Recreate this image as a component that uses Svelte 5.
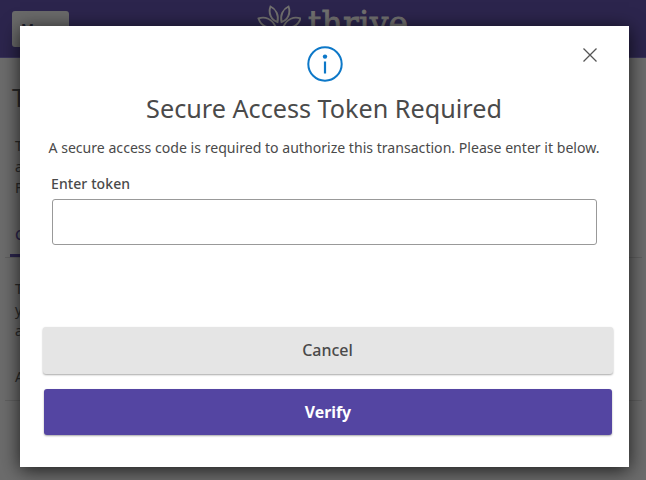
<script lang="ts">
  let open = $state(true);
  let token = $state('');

  function close() {
    open = false;
  }

  function verify(event: SubmitEvent) {
    event.preventDefault();
    if (token) close();
  }
</script>

<div class="page">
  <header class="topbar">
    <button class="menu" type="button">Menu</button>
    <div class="brand">
      <svg width="44" height="30" viewBox="0 0 44 30" fill="none" stroke="currentColor" stroke-width="1.9">
        <path d="M13.500 1.500C19 4 22 10 20.500 17C14 15 11 8 13.500 1.500Z" />
        <path d="M31.500 1.500C26 4 23 10 24.500 17C31 15 34 8 31.500 1.500Z" />
        <path d="M1.500 13.500C8 11 15 14 18.500 21.500C11 24 4 21 1.500 13.500Z" />
        <path d="M43.500 13.500C37 11 30 14 26.500 21.500C34 24 41 21 43.500 13.500Z" />
      </svg>
      <span>thrive</span>
    </div>
  </header>

  <main>
    <h1>T</h1>
    <p class="intro">T<br />a<br />F</p>
    <div class="tabs"><span class="tab">C</span></div>
    <p class="details">T<br />y<br />a</p>
    <p class="account">A</p>
  </main>
</div>

{#if open}
  <div class="backdrop">
    <form class="modal" onsubmit={verify}>
      <button class="close" type="button" aria-label="Close" onclick={close}>
        <svg width="14" height="14" viewBox="0 0 14 14" stroke="currentColor" stroke-width="1.3">
          <path d="M0.5 0.5L13.500 13.500M13.500 0.500L0.500 13.500" />
        </svg>
      </button>

      <svg class="info" width="36" height="36" viewBox="0 0 36 36" fill="none">
        <circle cx="18" cy="18" r="16.700" stroke="currentColor" stroke-width="2" />
        <circle cx="18" cy="10.600" r="2.200" fill="currentColor" />
        <path d="M18 15.500V27.500" stroke="currentColor" stroke-width="2.200" />
      </svg>

      <h2>Secure Access Token Required</h2>
      <p class="message">A secure access code is required to authorize this transaction. Please enter it below.</p>

      <label for="token">Enter token</label>
      <input id="token" type="text" autocomplete="off" bind:value={token} />

      <div class="actions">
        <button class="cancel" type="button" onclick={close}>Cancel</button>
        <button class="verify" type="submit">Verify</button>
      </div>
    </form>
  </div>
{/if}

<style>
  :global(*) {
    box-sizing: border-box;
  }

  :global(body) {
    margin: 0;
    overflow: hidden;
    background: #6c6c6c;
    font-family: 'Noto Sans', sans-serif;
  }

  button,
  input {
    font-family: inherit;
  }

  /* Page underneath, in its dimmed colours */
  .page {
    height: 480px;
    overflow: hidden;
    color: #2b2b2b;
  }

  .topbar {
    display: flex;
    align-items: flex-start;
    height: 58px;
    padding-left: 12px;
    background: #2c254d;
    border-bottom: 1px solid #39345a;
  }

  .menu {
    width: 57px;
    height: 36px;
    margin-top: 11px;
    padding: 0 0 1px;
    border: 0;
    border-radius: 3px;
    background: #6a6a6a;
    color: #1f1f2c;
    font-size: 14px;
    font-weight: 600;
  }

  .brand {
    display: flex;
    margin: 5px 0 0 188px;
    color: #71706f;
  }

  .brand span {
    margin: 0 0 0 7px;
    font-family: 'DejaVu Serif', serif;
    font-size: 33px;
    line-height: 38px;
    letter-spacing: 0.2px;
    -webkit-text-stroke: 0.8px #71706f;
  }

  main {
    padding: 0 4px 0 5px;
  }

  main p {
    margin: 0;
    padding-left: 10px;
    font-size: 14px;
    line-height: 21px;
  }

  h1 {
    margin: 0;
    padding: 20px 0 0 7px;
    font-size: 25px;
    font-weight: 400;
    line-height: 38px;
  }

  main .intro {
    padding-top: 19px;
  }

  .tabs {
    height: 60px;
    padding: 26px 0 0 5px;
    border-bottom: 1px solid #606060;
  }

  .tab {
    display: block;
    width: 60px;
    height: 33px;
    padding-left: 5px;
    border-bottom: 3px solid #2c254d;
    color: #2c254d;
    font-size: 14px;
    font-weight: 500;
    line-height: 21px;
  }

  main .details {
    padding-top: 20px;
  }

  main .account {
    height: 60px;
    padding-top: 25px;
    border-bottom: 1px solid #606060;
  }

  /* Dialog */
  .backdrop {
    position: absolute;
    inset: 0;
    padding: 26px 17px 13px 20px;
  }

  .modal {
    position: relative;
    display: flex;
    flex-direction: column;
    height: 441px;
    padding: 20px 16px 0 23px;
    background: #fff;
    box-shadow: 0 3px 18px rgba(0, 0, 0, 0.75);
    color: #4a4a4a;
  }

  .close {
    position: absolute;
    top: 22px;
    right: 32px;
    display: flex;
    padding: 0;
    border: 0;
    background: none;
    color: #555;
    cursor: pointer;
  }

  .info {
    align-self: center;
    margin-right: 7px;
    color: #0d78c8;
  }

  h2 {
    margin: 7px 8px 0 0;
    font-size: 25.2px;
    font-weight: 400;
    line-height: 38px;
    text-align: center;
    white-space: nowrap;
  }

  .message {
    margin: 10px 8px 0 0;
    font-size: 14.1px;
    line-height: 22px;
    text-align: center;
    white-space: nowrap;
  }

  label {
    margin: 15px 0 0 8px;
    font-size: 14px;
    font-weight: 500;
    line-height: 20px;
    letter-spacing: 0.1px;
  }

  input {
    width: 545px;
    height: 46px;
    margin: 5px 0 0 9px;
    padding: 0 12px;
    border: 1px solid #999;
    border-radius: 3px;
    outline: 0;
    color: inherit;
    font-size: 16px;
  }

  .actions {
    display: flex;
    flex-direction: column;
    gap: 15px;
    margin-top: 82px;
  }

  .actions button {
    height: 46px;
    padding: 0;
    border: 0;
    border-radius: 3px;
    box-shadow: 0 1px 2px rgba(0, 0, 0, 0.35);
    font-size: 16px;
    font-weight: 500;
    cursor: pointer;
  }

  .actions .cancel {
    height: 47px;
    padding: 0 1px 2px 0;
    background: #e5e5e5;
    color: #4a4a4a;
  }

  .actions .verify {
    margin: 0 1px;
    background: #5445a2;
    color: #fff;
    font-size: 15.8px;
    font-weight: 700;
  }
</style>
